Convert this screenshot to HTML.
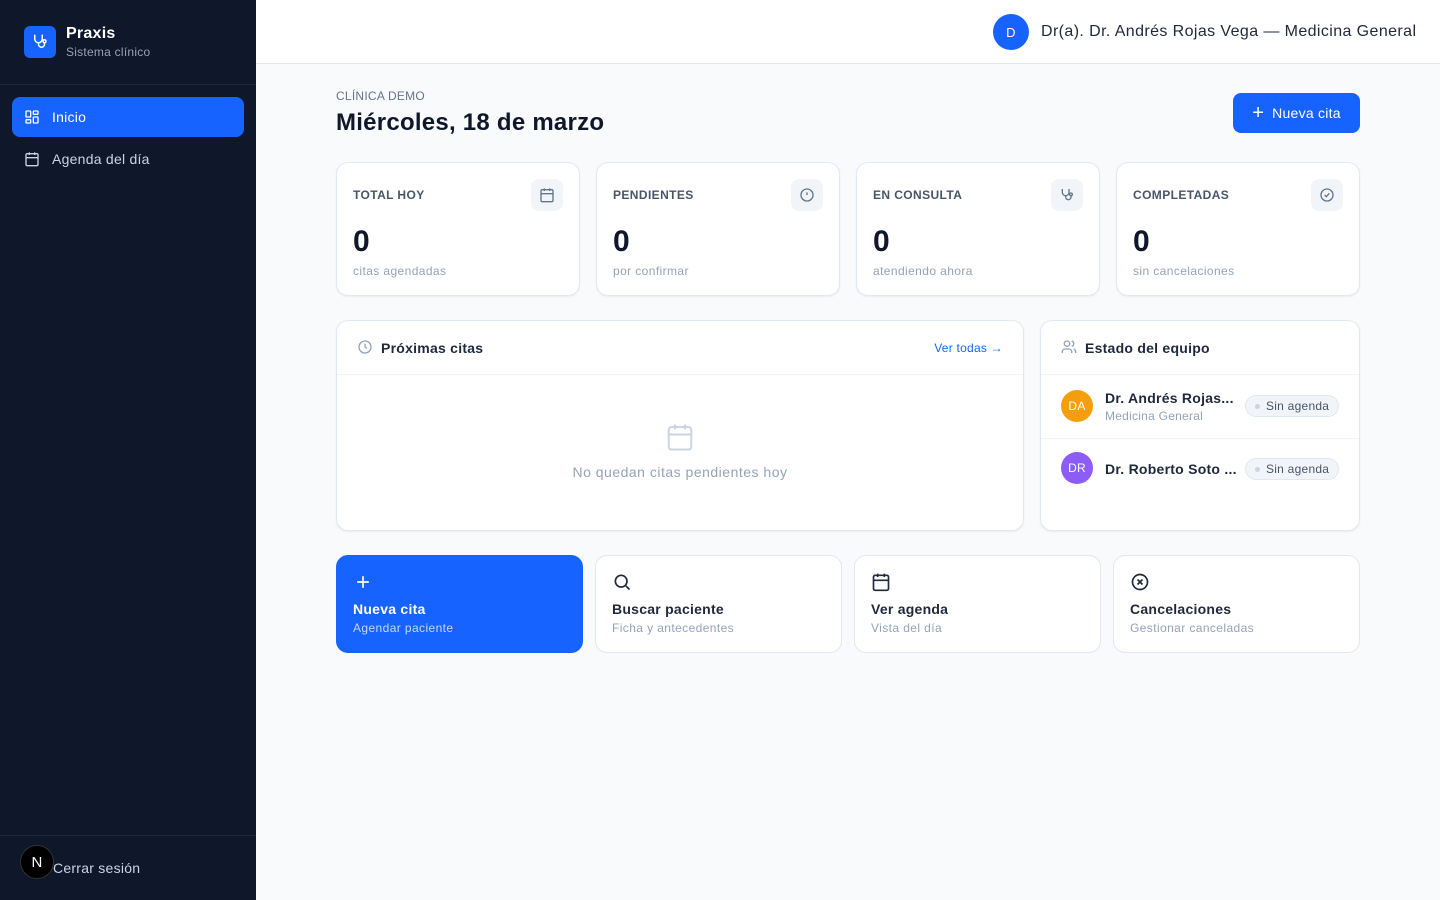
<!DOCTYPE html>
<html><head><meta charset="utf-8"><style>
*{box-sizing:border-box;margin:0;padding:0}
body{width:1440px;height:900px;font-family:"Liberation Sans",sans-serif;background:#f8fafc;position:relative;overflow:hidden;color:#0f172a;letter-spacing:.25px}
.sb{position:absolute;left:0;top:0;width:256px;height:900px;background:#0f172a}
.logo{position:absolute;left:24px;top:26px;width:32px;height:32px;border-radius:6px;background:#1763ff;display:flex;align-items:center;justify-content:center}
.bt{position:absolute;left:66px;top:25px;color:#fff;font-weight:bold;font-size:16px}
.bs{position:absolute;left:66px;top:45px;color:#94a3b8;font-size:12px}
.hr{position:absolute;left:0;width:256px;height:1px;background:#1e293b}
.nav{position:absolute;left:12px;width:232px;height:40px;border-radius:8px;display:flex;align-items:center;padding-left:12px;font-size:14px;color:#cbd5e1;gap:12px}
.nav.on{background:#1763ff;color:#fff}
.top{position:absolute;left:256px;top:0;right:0;height:64px;background:#fff;border-bottom:1px solid #e2e8f0}
.av{position:absolute;left:993px;top:14px;width:36px;height:36px;border-radius:50%;background:#1763ff;color:#fff;font-size:13px;display:flex;align-items:center;justify-content:center}
.un{position:absolute;left:1041px;top:23px;font-size:16px;color:#1e293b;letter-spacing:.4px}
.card{position:absolute;background:#fff;border:1px solid #e2e8f0;border-radius:12px;box-shadow:0 1px 2px rgba(0,0,0,.06)}
.lab{position:absolute;left:16px;top:25px;font-size:12px;font-weight:bold;color:#475569;letter-spacing:.4px}
.num{position:absolute;left:16px;top:62px;font-size:30px;font-weight:bold;color:#0f172a}
.sub{position:absolute;left:16px;top:101px;font-size:12px;color:#94a3b8;letter-spacing:.4px}
.ib{position:absolute;right:16px;top:16px;width:32px;height:32px;border-radius:8px;background:#f1f5f9;display:flex;align-items:center;justify-content:center}
.pill{position:absolute;left:204px;width:94px;height:22px;border-radius:11px;background:#f1f5f9;border:1px solid #e2e8f0;font-size:12px;color:#475569;display:flex;align-items:center;padding-left:20px}
.pill:before{content:"";position:absolute;left:9px;top:8px;width:5px;height:5px;border-radius:50%;background:#cbd5e1}
.qa{position:absolute;top:555px;height:98px;border-radius:12px;background:#fff;border:1px solid #e2e8f0}
.qa .t{position:absolute;left:16px;top:45px;font-size:14px;font-weight:bold;color:#1e293b}
.qa .s{position:absolute;left:16px;top:65px;font-size:12px;color:#94a3b8;letter-spacing:.4px}
.qa svg{position:absolute;left:16px;top:16px}
</style></head><body>
<div class="sb">
<div class="logo"><svg width="18" height="18" viewBox="0 0 24 24" fill="none" stroke="#fff" stroke-width="2" stroke-linecap="round"><path d="M5 3v5a5 5 0 0 0 10 0V3"/><path d="M10 13v2a4 4 0 0 0 8 0v-2"/><circle cx="18" cy="11" r="2"/></svg></div>
<div class="bt">Praxis</div><div class="bs">Sistema clínico</div>
<div class="hr" style="top:84px"></div>
<div class="nav on" style="top:97px"><svg width="16" height="16" viewBox="0 0 24 24" fill="none" stroke="#fff" stroke-width="2"><rect x="3" y="3" width="7" height="9" rx="1"/><rect x="14" y="3" width="7" height="5" rx="1"/><rect x="14" y="12" width="7" height="9" rx="1"/><rect x="3" y="16" width="7" height="5" rx="1"/></svg>Inicio</div>
<div class="nav" style="top:139px"><svg width="16" height="16" viewBox="0 0 24 24" fill="none" stroke="#cbd5e1" stroke-width="2"><rect x="3" y="4" width="18" height="18" rx="2"/><path d="M16 2v4M8 2v4M3 10h18M8 14h.01M12 14h.01M16 14h.01M8 18h.01M12 18h.01M16 18h.01"/></svg>Agenda del día</div>
<div class="hr" style="top:835px"></div>
<div style="position:absolute;left:20px;top:845px;width:34px;height:34px;border-radius:50%;background:#000;border:1px solid #333;color:#fff;font-size:15px;display:flex;align-items:center;justify-content:center">N</div>
<div style="position:absolute;left:53px;top:860px;font-size:14px;color:#cbd5e1">Cerrar sesión</div>
</div>
<div class="top"></div>
<div class="av">D</div><div class="un">Dr(a). Dr. Andrés Rojas Vega — Medicina General</div>
<div style="position:absolute;left:336px;top:89px;font-size:12px;color:#64748b">CLÍNICA DEMO</div>
<div style="position:absolute;left:336px;top:109px;font-size:24px;font-weight:bold;color:#0f172a">Miércoles, 18 de marzo</div>
<div style="position:absolute;left:1233px;top:93px;width:127px;height:40px;border-radius:8px;background:#1763ff;color:#fff;font-size:14px;display:flex;align-items:center;justify-content:center;gap:8px"><span style="font-size:20px;font-weight:300;line-height:1">+</span>Nueva cita</div>

<div class="card" style="left:336px;top:162px;width:244px;height:134px"><div class="lab">TOTAL HOY</div><div class="ib"><svg width="16" height="16" viewBox="0 0 24 24" fill="none" stroke="#64748b" stroke-width="2"><rect x="3" y="4" width="18" height="18" rx="2"/><path d="M16 2v4M8 2v4M3 10h18M8 14h.01M12 14h.01M16 14h.01M8 18h.01M12 18h.01M16 18h.01"/></svg></div><div class="num">0</div><div class="sub">citas agendadas</div></div>
<div class="card" style="left:596px;top:162px;width:244px;height:134px"><div class="lab">PENDIENTES</div><div class="ib"><svg width="16" height="16" viewBox="0 0 24 24" fill="none" stroke="#64748b" stroke-width="2"><circle cx="12" cy="12" r="9"/><path d="M12 8v4M12 16h.01"/></svg></div><div class="num">0</div><div class="sub">por confirmar</div></div>
<div class="card" style="left:856px;top:162px;width:244px;height:134px"><div class="lab">EN CONSULTA</div><div class="ib"><svg width="16" height="16" viewBox="0 0 24 24" fill="none" stroke="#64748b" stroke-width="2"><path d="M5 3v5a5 5 0 0 0 10 0V3"/><path d="M10 13v2a4 4 0 0 0 8 0v-2"/><circle cx="18" cy="11" r="2"/></svg></div><div class="num">0</div><div class="sub">atendiendo ahora</div></div>
<div class="card" style="left:1116px;top:162px;width:244px;height:134px"><div class="lab">COMPLETADAS</div><div class="ib"><svg width="16" height="16" viewBox="0 0 24 24" fill="none" stroke="#64748b" stroke-width="2"><circle cx="12" cy="12" r="9"/><path d="M8.5 12l2.5 2.5 4.5-5"/></svg></div><div class="num">0</div><div class="sub">sin cancelaciones</div></div>

<div class="card" style="left:336px;top:320px;width:688px;height:211px">
<svg style="position:absolute;left:20px;top:18px" width="16" height="16" viewBox="0 0 24 24" fill="none" stroke="#94a3b8" stroke-width="2"><circle cx="12" cy="12" r="9"/><path d="M12 7v5l3 2"/></svg>
<div style="position:absolute;left:44px;top:19px;font-size:14px;font-weight:bold;color:#1e293b">Próximas citas</div>
<div style="position:absolute;right:20px;top:20px;font-size:12px;color:#1763ff">Ver todas →</div>
<div style="position:absolute;left:0;right:0;top:53px;height:1px;background:#f1f5f9"></div>
<svg style="position:absolute;left:328px;top:101px" width="30" height="30" viewBox="0 0 24 24" fill="none" stroke="#cbd5e1" stroke-width="1.6"><rect x="3" y="4" width="18" height="18" rx="2"/><path d="M16 2v4M8 2v4M3 10h18M8 14h.01M12 14h.01M16 14h.01M8 18h.01M12 18h.01M16 18h.01"/></svg>
<div style="position:absolute;left:0;right:0;top:143px;text-align:center;font-size:14px;color:#94a3b8;letter-spacing:.5px">No quedan citas pendientes hoy</div>
</div>

<div class="card" style="left:1040px;top:320px;width:320px;height:211px">
<svg style="position:absolute;left:20px;top:18px" width="16" height="16" viewBox="0 0 24 24" fill="none" stroke="#94a3b8" stroke-width="2"><circle cx="9" cy="7" r="4"/><path d="M2 21v-2a4 4 0 0 1 4-4h6a4 4 0 0 1 4 4v2M16 3.1a4 4 0 0 1 0 7.8M22 21v-2a4 4 0 0 0-3-3.9"/></svg>
<div style="position:absolute;left:44px;top:19px;font-size:14px;font-weight:bold;color:#1e293b">Estado del equipo</div>
<div style="position:absolute;left:0;right:0;top:53px;height:1px;background:#f1f5f9"></div>
<div style="position:absolute;left:20px;top:69px;width:32px;height:32px;border-radius:50%;background:#f59e0b;color:#fff;font-size:12px;display:flex;align-items:center;justify-content:center">DA</div>
<div style="position:absolute;left:64px;top:69px;font-size:14px;font-weight:bold;color:#1e293b">Dr. Andrés Rojas...</div>
<div style="position:absolute;left:64px;top:88px;font-size:12px;color:#94a3b8">Medicina General</div>
<div class="pill" style="top:74px">Sin agenda</div>
<div style="position:absolute;left:0;right:0;top:117px;height:1px;background:#f1f5f9"></div>
<div style="position:absolute;left:20px;top:131px;width:32px;height:32px;border-radius:50%;background:#8b5cf6;color:#fff;font-size:12px;display:flex;align-items:center;justify-content:center">DR</div>
<div style="position:absolute;left:64px;top:140px;font-size:14px;font-weight:bold;color:#1e293b">Dr. Roberto Soto ...</div>
<div class="pill" style="top:137px">Sin agenda</div>
</div>

<div class="qa" style="left:336px;width:247px;background:#1763ff;border-color:#1763ff"><svg width="20" height="20" viewBox="0 0 24 24" fill="none" stroke="#fff" stroke-width="2"><path d="M12 5v14M5 12h14"/></svg><div class="t" style="color:#fff">Nueva cita</div><div class="s" style="color:#c7d7fe">Agendar paciente</div></div>
<div class="qa" style="left:595px;width:247px"><svg width="20" height="20" viewBox="0 0 24 24" fill="none" stroke="#1e293b" stroke-width="2"><circle cx="11" cy="11" r="7"/><path d="M21 21l-4.3-4.3"/></svg><div class="t">Buscar paciente</div><div class="s">Ficha y antecedentes</div></div>
<div class="qa" style="left:854px;width:247px"><svg width="20" height="20" viewBox="0 0 24 24" fill="none" stroke="#1e293b" stroke-width="2"><rect x="3" y="4" width="18" height="18" rx="2"/><path d="M16 2v4M8 2v4M3 10h18M8 14h.01M12 14h.01M16 14h.01M8 18h.01M12 18h.01M16 18h.01"/></svg><div class="t">Ver agenda</div><div class="s">Vista del día</div></div>
<div class="qa" style="left:1113px;width:247px"><svg width="20" height="20" viewBox="0 0 24 24" fill="none" stroke="#1e293b" stroke-width="2"><circle cx="12" cy="12" r="9"/><path d="M15 9l-6 6M9 9l6 6"/></svg><div class="t">Cancelaciones</div><div class="s">Gestionar canceladas</div></div>
</body></html>
